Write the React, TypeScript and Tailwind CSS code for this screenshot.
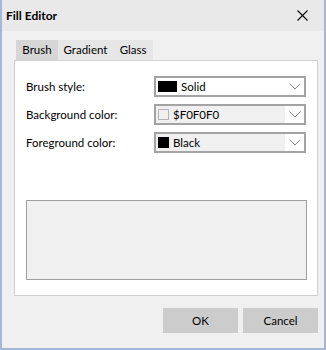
const font = { fontFamily: "Lato, 'Open Sans', sans-serif" };

function Combo({
  swatch,
  label,
  wide,
  shaded,
}: {
  swatch: string;
  label: string;
  wide?: boolean;
  shaded?: boolean;
}) {
  return (
    <div className="w-[152px] h-[21px] border-2 border-[#a3a3a3] bg-white flex items-center">
      <div
        className={`h-full flex items-center flex-1 pl-[2px] ${shaded ? "bg-[#f0f0f0]" : ""}`}
      >
        <span
          className={`${wide ? "w-[19px]" : "w-[11px]"} h-[11px] border ${
            swatch === "light" ? "bg-[#f0f0f0] border-[#b4b4b4]" : "bg-black border-black"
          }`}
        />
        <span className="ml-[4px] text-[11.5px] text-black leading-none">{label}</span>
      </div>
      <div className="w-[19px] h-full flex items-center justify-center">
        <svg width="12" height="7" viewBox="0 0 12 7">
          <path d="M0.5 0.5 L6 6 L11.5 0.5" fill="none" stroke="#8a8a8a" strokeWidth="1" />
        </svg>
      </div>
    </div>
  );
}

export default function App() {
  const rows = [
    { label: "Brush style:", swatch: "black", value: "Solid", wide: true, shaded: false },
    { label: "Background color:", swatch: "light", value: "$F0F0F0", wide: false, shaded: true },
    { label: "Foreground color:", swatch: "black", value: "Black", wide: false, shaded: true },
  ];

  return (
    <div
      className="w-[326px] h-[350px] bg-[#f0f0f0] border-x-2 border-b-2 border-[#a6b6d4] flex flex-col text-black"
      style={font}
    >
      <div className="h-[31px] bg-[#e9e9e9] flex items-center justify-between pl-[4px] pr-[16px] shrink-0">
        <span className="text-[12px] font-bold">Fill Editor</span>
        <svg width="11" height="11" viewBox="0 0 11 11">
          <path d="M0.5 0.5 L10.5 10.5 M10.5 0.5 L0.5 10.5" stroke="#000" strokeWidth="1.1" />
        </svg>
      </div>

      <div className="pl-[12px] pr-[6px] pt-[9px]">
        <div className="flex h-[20px] text-[11.5px] ml-[2px]">
          <div className="w-[42px] bg-[#d6d6d6] flex items-center justify-center">Brush</div>
          <div className="w-[55px] bg-[#e6e6e6] flex items-center justify-center">Gradient</div>
          <div className="w-[40px] bg-[#e6e6e6] flex items-center justify-center">Glass</div>
        </div>

        <div className="h-[236px] bg-white border border-[#d0d0d0] pl-[11px] pr-[10px] pt-[15px] flex flex-col">
          <div className="flex flex-col gap-[7px]">
            {rows.map((r) => (
              <div key={r.label} className="flex items-center h-[21px]">
                <span className="w-[128px] text-[11.5px]">{r.label}</span>
                <Combo swatch={r.swatch} label={r.value} wide={r.wide} shaded={r.shaded} />
              </div>
            ))}
          </div>
          <div className="mt-[47px] w-[281px] h-[80px] border border-[#a0a0a0] bg-[#f0f0f0]" />
        </div>

        <div className="flex justify-end gap-[5px] mt-[12px]">
          <button className="w-[75px] h-[25px] bg-[#cccccc] text-[11.5px]">OK</button>
          <button className="w-[75px] h-[25px] bg-[#cccccc] text-[11.5px]">Cancel</button>
        </div>
      </div>
    </div>
  );
}
